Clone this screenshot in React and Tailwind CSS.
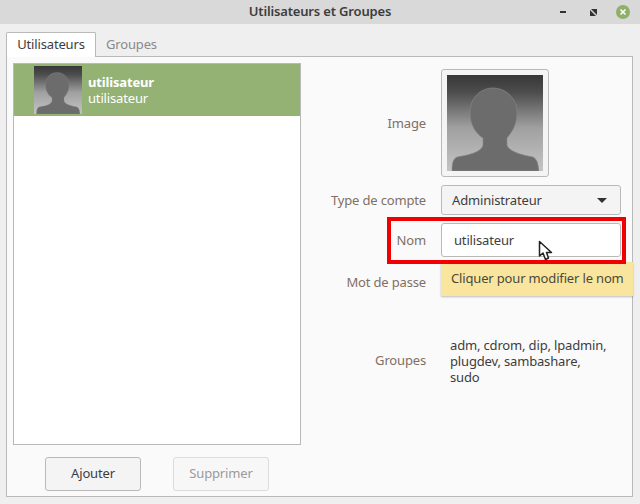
import React from 'react';

const FONT = '"Noto Sans", "Open Sans", sans-serif';

const Silhouette = ({ size, id }) => (
  <svg width={size} height={size} viewBox="0 0 96 96" className="block">
    <defs>
      <linearGradient id={id} x1="0" y1="0" x2="0" y2="1">
        <stop offset="0" stopColor="#373737" />
        <stop offset="0.18" stopColor="#4d4d4d" />
        <stop offset="0.55" stopColor="#a0a0a0" />
        <stop offset="1" stopColor="#c4c4c4" />
      </linearGradient>
    </defs>
    <rect width="96" height="96" fill={`url(#${id})`} />
    <path
      d="M5 96 C5 88 6 84 10 82 C20 80 34 78 36 70 L36 63 C31 60 23 52 23 38 C23 22 34 13 46 13 C58 13 70 22 70 38 C70 52 63 59 60 63 L60 70 C62 77 76 80 86 82 C90 84 91 88 92 96 Z"
      fill="#6c6c6c"
      stroke="#8a8a8a"
      strokeWidth="0.6"
    />
  </svg>
);

const Label = ({ children }) => (
  <div className="w-[124px] shrink-0 text-right text-[13px] text-[#7f6f64]">{children}</div>
);

const Cursor = () => (
  <svg width="16" height="22" viewBox="0 0 16 22" className="absolute left-[538px] top-[240px]">
    <path d="M1.5 1.5 L1.5 16 L5 13 L7.5 19.5 L10.5 18 L8.5 12.5 L13.5 12.5 Z" fill="#fff" stroke="#222" strokeWidth="1.5" strokeLinejoin="round" />
  </svg>
);

export default function App() {
  return (
    <div className="relative flex h-[504px] w-[640px] flex-col overflow-hidden bg-[#efefef] tracking-[-0.16px]" style={{ fontFamily: FONT }}>
      {/* titlebar */}
      <div className="relative flex h-6 items-center justify-center bg-[#d9d9d9] text-[13px] font-semibold text-[#3d3d3d]">
        Utilisateurs et Groupes
        <div className="absolute right-[10px] top-0 flex h-6 items-center">
          <div className="mr-[24px] h-[2px] w-[6px] bg-[#333]" />
          <svg width="7" height="7" viewBox="0 0 7 7" className="mr-[19px]">
            <path d="M0 7 L0 1 L6 7 Z M7 0 L7 6 L1 0 Z" fill="#333" />
          </svg>
          <svg width="14" height="14" viewBox="0 0 14 14">
            <circle cx="7" cy="7" r="7" fill="#8fb069" />
            <path d="M4.5 4.5 L9.5 9.5 M9.5 4.5 L4.5 9.5" stroke="#fff" strokeWidth="1.6" />
          </svg>
        </div>
      </div>

      <div className="flex flex-col pl-[6px] pr-[7px] pt-2">
        {/* tabs */}
        <div className="relative z-10 -mb-px flex h-[25px] items-stretch text-[13px]">
          <div className="flex w-[90px] items-center justify-center rounded-t-[2px] border border-b-0 border-[#b9b9b9] bg-white text-[#3d3d3d]">
            Utilisateurs
          </div>
          <div className="flex items-center pl-[10px] text-[#8a8a8a]">Groupes</div>
        </div>

        {/* panel */}
        <div className="flex h-[441px] border border-[#b9b9b9] bg-[#fafafa]">
          <div className="flex w-[295px] shrink-0 flex-col pl-[6px] pt-[6px]">
            <div className="h-[382px] w-[288px] border border-[#b9b9b9] bg-white">
              <div className="flex h-[52px] items-center bg-[#94b274] pl-5">
                <Silhouette size={48} id="small" />
                <div className="ml-[6px] text-[13px] leading-4 text-white">
                  <div className="font-bold">utilisateur</div>
                  <div>utilisateur</div>
                </div>
              </div>
            </div>
            <div className="mt-3 flex pl-8">
              <div className="flex h-[34px] w-[96px] items-center justify-center rounded-[3px] border border-[#b9b9b9] bg-[#f4f4f4] text-[13px] text-[#3d3d3d]">
                Ajouter
              </div>
              <div className="ml-8 flex h-[34px] w-[96px] items-center justify-center rounded-[3px] border border-[#dcdcdc] bg-[#f7f7f7] text-[13px] text-[#9a9a9a]">
                Supprimer
              </div>
            </div>
          </div>

          <div className="flex flex-1 flex-col pt-3">
            <div className="flex h-[108px] items-center">
              <Label>
                <span className="relative top-px">Image</span>
              </Label>
              <div className="ml-[15px] h-[108px] w-[108px] rounded-[3px] border border-[#b9b9b9] bg-[#f4f4f4] p-[5px]">
                <Silhouette size={96} id="large" />
              </div>
            </div>
            <div className="mt-2 flex h-[30px] items-center">
              <Label>
                <span className="relative top-px">Type de compte</span>
              </Label>
              <div className="ml-[15px] flex h-[30px] w-[180px] items-center justify-between rounded-[3px] border border-[#b9b9b9] bg-[#f4f4f4] pl-[10px] pr-[13px] text-[13px] text-[#3d3d3d]">
                <span className="relative top-px">Administrateur</span>
                <div className="h-0 w-0 border-x-[5px] border-t-[5px] border-x-transparent border-t-[#333]" />
              </div>
            </div>
            <div className="mt-2 flex h-[34px] items-center">
              <Label>
                <span className="relative top-px">Nom</span>
              </Label>
              <div className="ml-[15px] flex h-[34px] w-[180px] items-center rounded-[3px] border border-[#b9b9b9] bg-white pl-3 text-[13px] text-[#3d3d3d]">
                <span className="relative top-px">utilisateur</span>
              </div>
            </div>
            <div className="mt-[15px] flex h-[22px] items-center">
              <Label>Mot de passe</Label>
            </div>
            <div className="mt-[43px] flex items-center">
              <Label>Groupes</Label>
              <div className="ml-6 w-[160px] text-[13px] leading-4 text-[#3d3d3d]">
                adm, cdrom, dip, lpadmin, plugdev, sambashare, sudo
              </div>
            </div>
          </div>
        </div>
      </div>

      {/* annotation + tooltip over the window */}
      <div className="absolute left-[441px] top-[262px] flex h-[34px] w-[192px] items-center bg-[#fae59f] pl-[10px] text-[13px] text-[#4a4a3a] shadow-[0_1px_2px_rgba(0,0,0,0.25)]">
        Cliquer pour modifier le nom
      </div>
      <div className="absolute left-[387px] top-[217px] h-[47px] w-[239px] border-4 border-[#f00000]" />
      <Cursor />
    </div>
  );
}
